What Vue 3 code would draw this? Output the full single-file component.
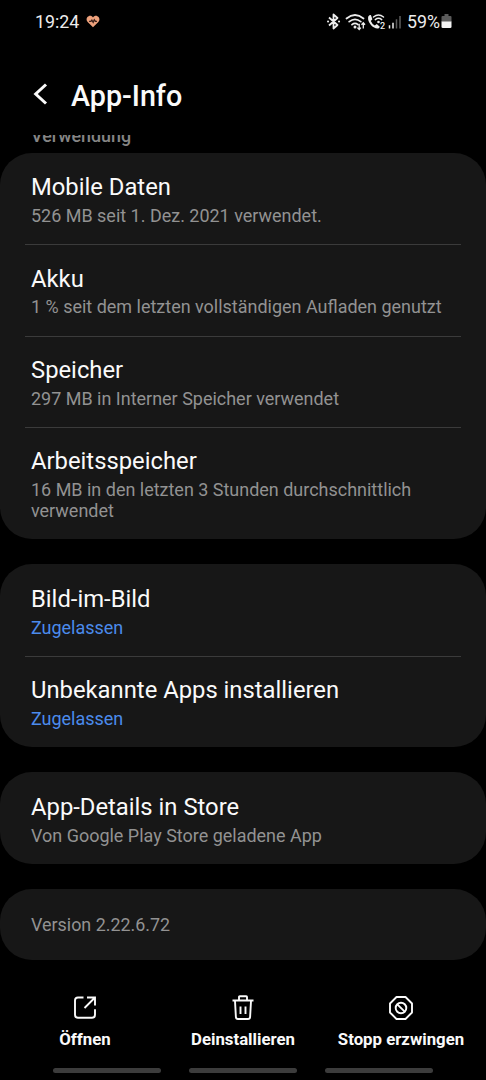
<script setup>
const groups = [
  [
    { title: 'Mobile Daten', text: '526 MB seit 1. Dez. 2021 verwendet.' },
    { title: 'Akku', text: '1 % seit dem letzten vollständigen Aufladen genutzt' },
    { title: 'Speicher', text: '297 MB in Interner Speicher verwendet' },
    { title: 'Arbeitsspeicher', text: '16 MB in den letzten 3 Stunden durchschnittlich verwendet' }
  ],
  [
    { title: 'Bild-im-Bild', text: 'Zugelassen', active: true },
    { title: 'Unbekannte Apps installieren', text: 'Zugelassen', active: true }
  ],
  [
    { title: 'App-Details in Store', text: 'Von Google Play Store geladene App' }
  ]
]
</script>

<template>
  <div class="screen">
    <header class="status">
      <span class="status__time">19:24</span>
      <svg class="status__heart" width="14" height="13" viewBox="0 0 16 14">
        <path d="M8 13.5 1.9 7.6C-.2 5.3.4 1.9 3 .9 5 .1 7 .8 8 2.5 9 .8 11 .1 13 .9c2.6 1 3.2 4.4 1.1 6.7Z" fill="#eda17c" />
        <path d="M3.500 6.800h2l1.200-1.300 1.500 2.500 1.300-3 1.300 1.800h1.700" fill="none" stroke="#3a211b" stroke-width="1.5" />
      </svg>
      <div class="status__icons">
        <svg width="76" height="22" viewBox="0 0 76 22" class="status__glyphs" fill="none" stroke="#ededed">
          <path d="m4 6.500 8.500 7.500-4 3.500v-14l4 3.500L4 14.500" stroke-width="1.8" stroke-linejoin="round" />
          <path d="M3 10.500h.1M14 10.500h.1" stroke-width="2" stroke-linecap="round" />
          <path d="M21.500 7.500q8.500-7 17 0M24.200 10.700q5.800-4.800 11.600 0M27 13.700q3-2.500 6 0" stroke-width="1.7" stroke-linecap="round" />
          <circle cx="30" cy="16" r="1.5" fill="#ededed" stroke="none" />
          <path d="M34.200 12.800v5.500m-1.800-1.700 1.800 1.900 1.700-1.900M38.300 17.400v-5.500M36.500 13.700l1.800-1.900 1.700 1.900" stroke-width="1.3" />
          <path d="M44.300 4.200q-1.700 1.200-1.200 4.100c.8 4.600 4.900 8.900 9.300 9.300 1.300.1 2-.6 2.400-1.800l-3-2.700-2 1.400q-2.600-1.400-4-4.600l1.600-1.600-1.500-4.300Z" fill="#ededed" stroke="none" />
          <path d="M48.500 6q5-4 10 0M50.300 8.600q3.200-2.500 6.400 0" stroke-width="1.5" stroke-linecap="round" />
          <circle cx="53.5" cy="11" r="1.3" fill="#ededed" stroke="none" />
          <text x="55" y="18" class="status__sim">2</text>
          <path d="M64.500 17.500v-3.300M68 17.500v-5.700" stroke-width="1.5" />
          <path d="M71.500 17.500V8.200M75 17.500V5" stroke="#5d5d5d" stroke-width="1.5" />
        </svg>
        <span class="status__percent">59%</span>
        <svg width="11" height="16" viewBox="0 0 11 16">
          <path d="M3.500 0h4v2H9.500Q10.500 2 10.500 3v5H.5V3q0-1 1-1h2Z" fill="#5b5b5b" />
          <path d="M.5 7.500h10v5.200q0 1.300-1.300 1.300H1.800Q.5 14 .5 12.700Z" fill="#f4f4f4" />
        </svg>
      </div>
    </header>

    <div class="toolbar">
      <svg class="toolbar__back" width="16" height="24" viewBox="0 0 16 24">
        <path d="M13 2.500 2.700 12 13 21.500" fill="none" stroke="#fafafa" stroke-width="3" />
      </svg>
      <h1 class="toolbar__title">App-Info</h1>
    </div>

    <main class="content">
      <div class="section"><span class="section__label">Verwendung</span></div>
      <section v-for="(rows, i) in groups" :key="i" class="card">
        <div v-for="row in rows" :key="row.title" class="row">
          <div class="row__title">{{ row.title }}</div>
          <div :class="['row__text', { 'row__text--active': row.active }]">{{ row.text }}</div>
        </div>
      </section>
      <section class="card card--version">Version 2.22.6.72</section>
    </main>

    <footer class="actions">
      <button type="button" class="action">
        <svg width="26" height="26" viewBox="0 0 26 26">
          <path d="M11.500 2.500H6Q3 2.500 3 5.500v14.300q0 3 3 3h14q3 0 3-3v-5.500M15 2.500h8v8M22.500 3 12.500 13" />
        </svg>
        <span>Öffnen</span>
      </button>
      <button type="button" class="action">
        <svg width="26" height="26" viewBox="0 0 26 26">
          <path d="M2.500 5.500h21M9 5V2q0-.8.8-.8h6.400q.8 0 .8.800v3M5 6l.9 16q.1 2 2.100 2h10q2 0 2.100-2L21 6M10.500 11.500v7.500M15.500 11.500v7.500" />
        </svg>
        <span>Deinstallieren</span>
      </button>
      <button type="button" class="action">
        <svg width="26" height="26" viewBox="0 0 26 26">
          <path d="M8.500 2h9L24 8.500v9L17.500 24h-9L2 17.500v-9Z" stroke-linejoin="round" />
          <circle cx="13" cy="13" r="5.3" />
          <path d="m9.300 9.300 7.400 7.400" />
        </svg>
        <span>Stopp erzwingen</span>
      </button>
    </footer>

    <div class="gestures">
      <span v-for="n in 3" :key="n" class="gestures__bar"></span>
    </div>
  </div>
</template>

<style>
body {
  background: #000;
}
</style>

<style scoped>
.screen {
  display: flex;
  flex-direction: column;
  width: 486px;
  height: 1080px;
  overflow: hidden;
  background: #000;
  color: #fafafa;
  font-family: Roboto, "Liberation Sans", sans-serif;
}

.status {
  display: flex;
  align-items: center;
  box-sizing: border-box;
  height: 43px;
  padding: 0 34px 0 35px;
  color: #ededed;
  font-size: 17.8px;
}

.status__heart {
  margin-left: 6.5px;
}

.status__icons {
  display: flex;
  align-items: center;
  margin-left: auto;
}

.status__glyphs {
  margin-right: 6px;
}

.status__sim {
  fill: #ededed;
  stroke: none;
  font-size: 9px;
  font-weight: 500;
}

.status__percent {
  margin-right: 1px;
}

.toolbar {
  display: flex;
  align-items: center;
  box-sizing: border-box;
  height: 92px;
  padding: 12px 0 0 33px;
}

.toolbar__back {
  margin-top: -2px;
}

.toolbar__title {
  margin: 2px 0 0 22px;
  font-size: 28.7px;
  font-weight: 500;
  line-height: 34px;
}

.content {
  display: flex;
  flex-direction: column;
  gap: 25.2px;
}

.section {
  display: flex;
  align-items: flex-end;
  height: 17.8px;
  margin-bottom: -25.2px;
  overflow: hidden;
}

.section__label {
  padding: 0 0 6.5px 31px;
  color: #858585;
  font-size: 17.9px;
  font-weight: 500;
  line-height: 21px;
}

.card {
  padding: 0 25px;
  border-radius: 32px;
  background: #171717;
}

.row {
  padding: 20.5px 6px 18.2px;
}

.row + .row {
  padding-top: 19.5px;
  border-top: 1px solid #3b3b3b;
}

.row__title {
  margin-bottom: 3.7px;
  font-size: 23.8px;
  line-height: 28px;
}

.row__text {
  color: #929292;
  font-size: 17.98px;
  line-height: 21px;
}

.row__text--active {
  color: #4b8bec;
}

.card--version {
  padding: 25.5px 31px 24.5px;
  color: #929292;
  font-size: 17.9px;
  line-height: 21px;
}

.actions {
  display: grid;
  grid-template-columns: repeat(3, 158px);
  padding: 35px 0 0 6px;
}

.action {
  display: flex;
  flex-direction: column;
  align-items: center;
  gap: 8px;
  padding: 0;
  border: none;
  background: none;
  color: #fafafa;
  font: 700 16.8px/21px Roboto, "Liberation Sans", sans-serif;
  white-space: nowrap;
}

.action svg {
  fill: none;
  stroke: #fafafa;
  stroke-width: 1.9;
}

.gestures {
  display: flex;
  gap: 28.5px;
  margin: auto 0 7px 53px;
}

.gestures__bar {
  width: 107.5px;
  height: 5px;
  border-radius: 3px;
  background: #3c3c3c;
}
</style>
